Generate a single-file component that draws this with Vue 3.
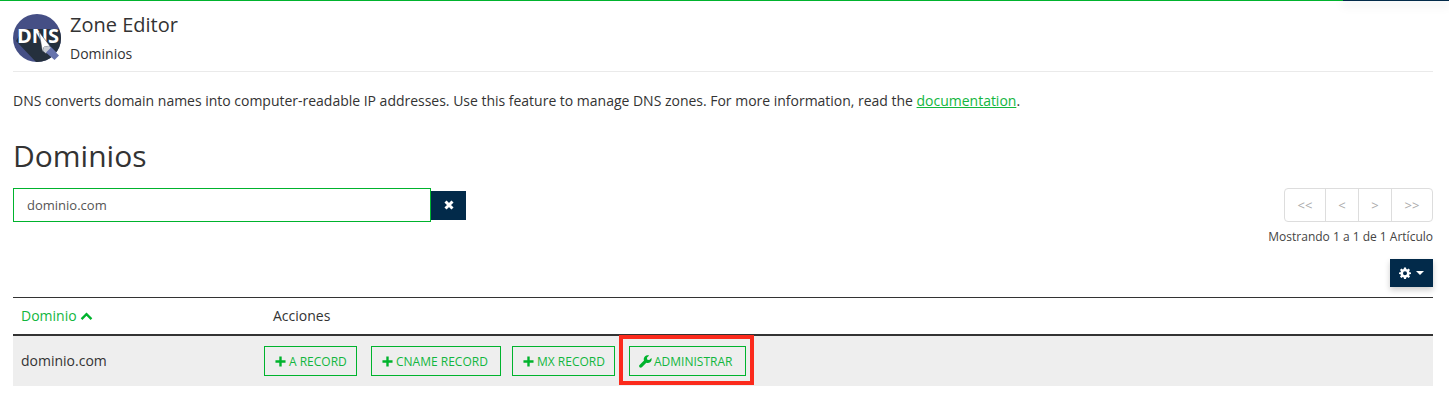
<script setup>
const pages = ['<<', '<', '>', '>>']
const records = [
  { label: 'A RECORD', cls: 'w-a' },
  { label: 'CNAME RECORD', cls: 'w-cname' },
  { label: 'MX RECORD', cls: 'w-mx' },
]
</script>

<template>
  <div class="page">
    <div class="topbar"><div class="topbar-tab"></div></div>
    <main class="content">
      <header class="head">
        <svg class="logo" viewBox="0 0 48 48" width="48" height="48">
          <defs><clipPath id="c"><circle cx="24" cy="24" r="24" /></clipPath></defs>
          <g clip-path="url(#c)">
            <rect width="48" height="48" fill="#454f85" />
            <path d="M3 27 L10 15 L46 15 L48 20 L48 48 L23 48Z" fill="#25303d" />
            <path d="M35 30 L48 43 L44 48 L31 36Z" fill="#6673ad" />
            <path d="M29 30 L35 30 L31 36 L30 36Z" fill="#c8ccd3" />
          </g>
          <text x="25" y="29" text-anchor="middle" class="logo-text">DNS</text>
          <path d="M26 18 L29.500 38 L31 33 L37 32Z" fill="#fff" stroke="#25303d" stroke-width=".5" />
          <path d="M31 33 L36 32 L38.500 34.500 L33 39.500 L30 37Z" fill="#c8ccd3" />
          <path d="M38 33.500 L46 41.500 L41.500 46 L33 38.500Z" fill="#6673ad" />
        </svg>
        <div class="head-text">
          <div class="app-title">Zone Editor</div>
          <div class="app-sub">Dominios</div>
        </div>
      </header>

      <p class="desc">DNS converts domain names into computer-readable IP addresses. Use this feature to manage DNS zones. For more information, read the <a href="#" class="doc">documentation</a>.</p>

      <h1 class="heading">Dominios</h1>

      <div class="toolbar">
        <div class="search">
          <div class="input">dominio.com</div>
          <button class="clear">
            <svg viewBox="0 0 12 12" width="12" height="12"><path d="M2.500 2.500 L9.500 9.500 M9.500 2.500 L2.500 9.500" stroke="#fff" stroke-width="3" /></svg>
          </button>
        </div>
        <div class="pager-box">
          <div class="pager">
            <span v-for="p in pages" :key="p" class="page-btn">{{ p }}</span>
          </div>
          <div class="count">Mostrando 1 a 1 de 1 Artículo</div>
        </div>
      </div>

      <div class="settings-row">
        <button class="settings">
          <svg viewBox="0 0 24 24" width="12" height="12"><path fill="#fff" fill-rule="evenodd" d="M10 1h4l.6 3.200 1.900.8L19.200 3.100 22 5.900 20.100 8.600l.8 1.900L24 11v3l-3.100.6-.8 1.900 1.900 2.700-2.800 2.800-2.700-1.900-1.900.8L14 24h-4l-.6-3.100-1.900-.8-2.700 1.900L2 19.200l1.900-2.700-.8-1.900L0 14v-3l3.100-.5.800-1.900L2 5.900 4.800 3.100 7.500 5l1.900-.8zM12 8.500a4 4 0 1 0 0 8 4 4 0 0 0 0-8z"/></svg>
          <span class="caret"></span>
        </button>
      </div>

      <div class="table">
        <div class="thead">
          <div class="col-a sort">Dominio
            <svg viewBox="0 0 14 10" width="13" height="9"><path d="M1.500 8 L7 2.500 L12.500 8" fill="none" stroke="#00b32d" stroke-width="2.600" /></svg>
          </div>
          <div class="col-b">Acciones</div>
        </div>
        <div class="row">
          <div class="col-a cell-name">dominio.com</div>
          <div class="col-b actions">
            <a v-for="r in records" :key="r.label" href="#" class="act" :class="r.cls">
              <svg viewBox="0 0 12 12" width="11" height="11"><path d="M6 .5 V11.500 M.5 6 H11.500" stroke="#00b32d" stroke-width="2.600" /></svg>
              {{ r.label }}
            </a>
            <span class="marked">
              <a href="#" class="act w-admin">
                <svg viewBox="0 0 14 14" width="13" height="13"><path fill="#00b32d" d="M13.400 3.200 11 5.500 9 5 8.500 3 10.900.6C9.300 0 7.500.3 6.300 1.500 5.100 2.700 4.800 4.400 5.400 5.900L.6 10.700c-.7.700-.7 1.800 0 2.500.7.700 1.800.7 2.500 0l4.800-4.800c1.500.6 3.200.3 4.400-.9 1.200-1.200 1.600-2.800 1.100-4.300z"/></svg>
                ADMINISTRAR
              </a>
            </span>
          </div>
        </div>
      </div>
    </main>
  </div>
</template>

<style>
html, body { background: #fff; }
</style>

<style scoped>
.page { width: 1449px; height: 414px; overflow: hidden; font-family: "Open Sans", sans-serif; color: #333; background: #fff; }
.topbar { height: 1px; background: #00b32d; display: flex; justify-content: flex-end; }
.topbar-tab { width: 106px; height: 1px; background: #022a4a; box-shadow: 0 3px 10px rgba(2, 42, 74, .35); }
.content { padding: 0 16px 0 13px; }
.head { display: flex; gap: 9px; padding-top: 13px; height: 57px; border-bottom: 1px solid #eaeaea; box-sizing: content-box; }
.logo { display: block; flex: none; }
.logo-text { font: 700 20px "Open Sans", sans-serif; fill: #fff; }
.head-text { margin-top: -3px; }
.app-title { font-size: 20px; line-height: 27px; }
.app-sub { font-size: 14px; line-height: 19px; margin-top: 6px; }
.desc { margin: 19px 0 0; font-size: 14px; line-height: 20px; letter-spacing: -0.001em; }
.doc { color: #12b63e; text-decoration: underline; }
.heading { margin: 24px 0 0; font-size: 30px; font-weight: 400; line-height: 41px; }
.toolbar { display: flex; justify-content: space-between; align-items: flex-start; margin-top: 12px; }
.search { display: flex; align-items: center; }
.input { width: 418px; height: 34px; box-sizing: border-box; border: 1px solid #00b32d; padding-left: 13px; font-size: 13px; line-height: 32px; color: #555; }
.clear { width: 35px; height: 29px; border: 0; padding: 0; background: #022a4a; display: flex; align-items: center; justify-content: center; }
.pager-box { display: flex; flex-direction: column; align-items: flex-end; }
.pager { display: flex; height: 34px; box-sizing: border-box; border: 1px solid #ddd; border-radius: 4px; }
.page-btn { display: flex; align-items: center; justify-content: center; box-sizing: border-box; width: 33px; font-size: 13px; color: #aaa; border-left: 1px solid #ddd; }
.page-btn:first-child { width: 40px; border-left: 0; }
.page-btn:last-child { width: 41px; }
.count { font-size: 12px; line-height: 17px; margin-top: 6px; color: #444; }
.settings-row { display: flex; justify-content: flex-end; margin-top: 14px; }
.settings { width: 43px; height: 28px; border: 0; padding: 0; background: #022a4a; box-shadow: 0 3px 6px rgba(0, 0, 0, .2); display: flex; align-items: center; justify-content: center; gap: 5px; }
.caret { width: 0; height: 0; border: 4px solid transparent; border-top-color: #fff; border-bottom: 0; }
.table { margin-top: 10px; border-top: 1px solid #333; font-size: 14px; }
.thead { display: flex; align-items: center; height: 34px; padding-bottom: 2px; border-bottom: 2px solid #333; }
.col-a { width: 252px; padding-left: 8px; box-sizing: content-box; }
.col-b { padding-left: 0; }
.sort { color: #12b63e; }
.row { display: flex; align-items: center; height: 50px; background: #eee; }
.cell-name { margin-top: -2px; }
.actions { display: flex; align-items: center; gap: 14px; margin-left: -9px; }
.act { display: flex; align-items: center; gap: 3px; height: 30px; box-sizing: border-box; border: 1px solid #00b32d; padding-left: 10px; font-size: 12px; color: #12b63e; text-decoration: none; background: transparent; }
.w-a { width: 93px; }
.w-cname { width: 130px; margin-right: -3px; }
.w-mx { width: 103px; }
.w-admin { width: 117px; gap: 2px; padding-left: 9px; }
.marked { position: relative; }
.marked::after { content: ""; position: absolute; left: -10px; top: -11px; width: 135px; height: 50px; box-sizing: border-box; border: 4px solid #fb2a1c; }
</style>
